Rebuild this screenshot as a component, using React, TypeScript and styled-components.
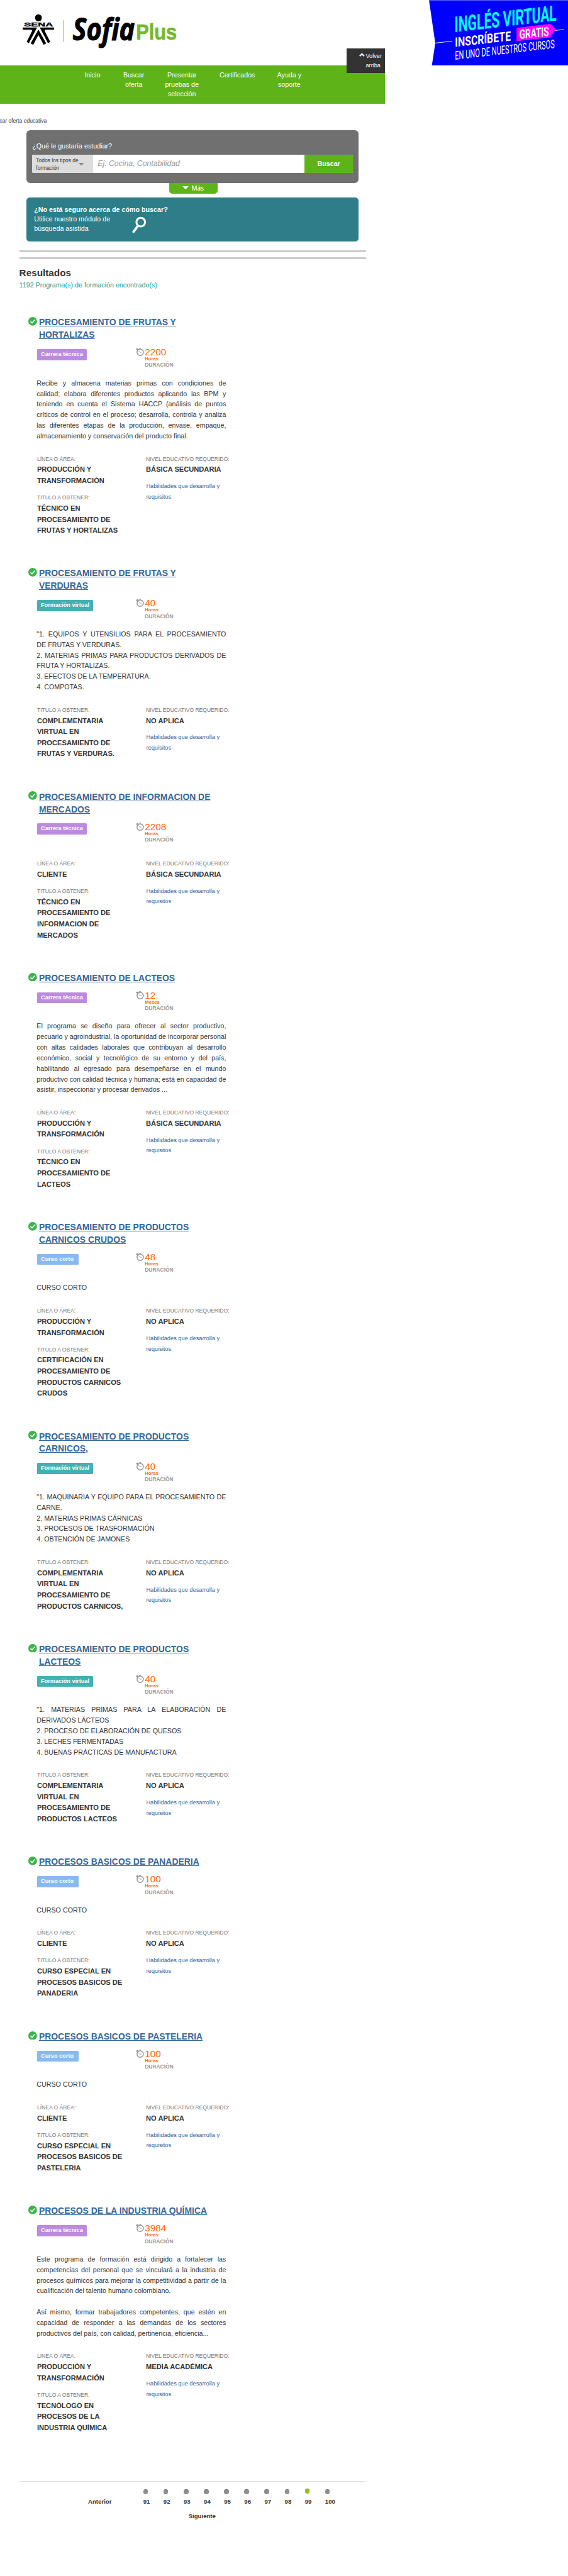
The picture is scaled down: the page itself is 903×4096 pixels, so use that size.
import React from "react";
import styled, { createGlobalStyle } from "styled-components";

const GlobalStyle = createGlobalStyle`
  html, body { margin: 0; padding: 0; background: #fff; }
  * { box-sizing: border-box; }
`;

const Page = styled.div`
  zoom: 0.76517;
  position: relative;
  width: 1180px;
  height: 5353px;
  overflow: hidden;
  background: #fff;
  color: #333;
  font-family: "Liberation Sans", Arial, sans-serif;
  font-size: 14px;
  line-height: 22px;
`;

/* ---------- header ---------- */

const Header = styled.header`
  display: flex;
  justify-content: space-between;
  height: 136px;

  svg { display: block; overflow: visible; }
`;

const MainColumn = styled.div`
  position: relative;
  width: 800px;
`;

const Nav = styled.nav`
  display: flex;
  height: 80px;
  padding: 10px 0 0 150px;
  background: #5eb319;
`;

const NavItem = styled.a<{ $width: number }>`
  width: ${(p) => p.$width}px;
  padding: 0 18px;
  color: #fff;
  text-align: center;
  line-height: 20px;
`;

const BackToTop = styled.a`
  position: absolute;
  top: -36px;
  right: 0;
  display: flex;
  width: 80px;
  height: 52px;
  padding: 7px 0 0 26.5px;
  background: #333;
  color: #fff;
  font-size: 12px;
  line-height: 20px;

  svg { flex: none; margin: 3px 2px 0 0; }
`;

const Breadcrumb = styled.div`
  display: flex;
  justify-content: flex-end;
  width: 97px;
  margin-top: 24px;
  font-size: 11.2px;
  white-space: nowrap;
`;

/* ---------- search ---------- */

const SearchPanel = styled.section`
  width: 690px;
  height: 110px;
  margin: 8px 0 0 55px;
  padding: 23px 12px 0;
  border-radius: 8px;
  background: #707070;
`;

const SearchTitle = styled.div`
  height: 29px;
  color: #fff;
`;

const SearchRow = styled.div`
  display: flex;
  height: 38px;
  border-radius: 3px;
  overflow: hidden;
  background: #fff;
`;

const TypeSelect = styled.div`
  display: flex;
  align-items: center;
  width: 127px;
  padding-left: 8px;
  background: #ddd;
  font-size: 11px;
  line-height: 16px;
  white-space: nowrap;

  svg { flex: none; }
`;

const SearchInput = styled.div`
  flex: 1;
  padding-left: 9px;
  color: #999;
  font-size: 16px;
  font-style: italic;
  line-height: 37px;
`;

const SearchButton = styled.div`
  width: 100px;
  background: #5eb319;
  color: #fff;
  font-weight: bold;
  line-height: 38px;
  text-align: center;
`;

const MoreTab = styled.div`
  display: flex;
  align-items: center;
  gap: 6px;
  width: 100px;
  height: 22px;
  margin-left: 352px;
  padding-left: 27px;
  border-radius: 0 0 7px 7px;
  background: #5eb319;
  color: #fff;
  font: 500 13px/22px "Noto Sans", sans-serif;
`;

const AssistPanel = styled.section`
  display: flex;
  width: 690px;
  height: 92px;
  margin: 8px 0 0 55px;
  padding: 16px;
  border-radius: 7px;
  background: #2d7e89;
  color: #fff;
  line-height: 20px;
  white-space: nowrap;

  svg { flex: none; margin: 24px 0 0 -73.5px; }
`;

const Rule = styled.div<{ $gap: number }>`
  height: 4px;
  margin: ${(p) => p.$gap}px 40px 0;
  background: #cbcbcb;
`;

const ResultsHeading = styled.h2`
  margin: 17px 0 0 40px;
  font-size: 20px;
  line-height: 24px;
`;

const ResultsCount = styled.div`
  margin: 2px 0 0 40px;
  padding-top: 1px;
  color: #16a09b;
`;

/* ---------- result cards ---------- */

const Results = styled.main`
  padding: 54px 0 0 59px;
`;

const Card = styled.article`
  padding-bottom: 65px;
`;

const TitleRow = styled.div`
  display: flex;

  svg { flex: none; margin: 1px 4px 0 0; }
`;

const Title = styled.a`
  width: 375px;
  color: #33689c;
  font-size: 18.2px;
  font-weight: bold;
  line-height: 26px;
  text-decoration: underline;
`;

const Meta = styled.div`
  display: flex;
  height: 62px;
  margin: 13.3px 0 0 18px;
`;

const badgeColors = {
  "Carrera técnica": "#bc8bdd",
  "Formación virtual": "#43b1b1",
  "Curso corto": "#88baf0",
};
type BadgeKind = keyof typeof badgeColors;

const BadgeCell = styled.div`
  width: 205px;
  padding-top: 1px;
`;

const Badge = styled.span<{ $kind: BadgeKind }>`
  display: inline-block;
  min-width: 86px;
  height: 23px;
  padding: 0 8px;
  border-radius: 2px;
  background: ${(p) => badgeColors[p.$kind]};
  color: #fff;
  font-size: 12px;
  font-weight: bold;
  line-height: 23px;
`;

const Duration = styled.div`
  display: flex;

  svg { flex: none; margin-right: 2px; }
`;

const Amount = styled.div`
  color: #ff6a0d;
  font-size: 20px;
  line-height: 17px;
`;

const Unit = styled.div`
  color: #ff6a0d;
  font-size: 10px;
  font-weight: bold;
  line-height: 12px;
`;

const DurationLabel = styled.div`
  color: #999;
  font-size: 11px;
  font-weight: bold;
  line-height: 14px;
`;

const Description = styled.p`
  width: 393.5px;
  margin: 0 0 0 17.2px;
  padding-bottom: 13px;
  text-align: justify;
  white-space: pre-line;
`;

const Fields = styled.div`
  display: flex;
  padding: 13px 0 0 18px;
`;

const Column = styled.div<{ $width: number }>`
  width: ${(p) => p.$width}px;
`;

const Field = styled.div`
  & + & { margin-top: 12.5px; }
`;

const Label = styled.div`
  color: #777;
  font-size: 11.2px;
  white-space: nowrap;
`;

const Value = styled.div`
  width: 200px;
  font-size: 14.56px;
  font-weight: bold;
  line-height: 23px;
`;

const SkillsLink = styled.a`
  display: block;
  width: 175px;
  margin: 12px 0 0 0.5px;
  color: #33689c;
  font-size: 12.1px;
`;

/* ---------- pagination ---------- */

const Pagination = styled.footer`
  margin: 34.2px 40px 0;
  padding-left: 143px;
  border-top: 1px solid #ddd;
  font-size: 12.6px;
  font-weight: bold;
`;

const PageRow = styled.div`
  display: flex;
  padding-top: 14px;
`;

const Previous = styled.a`
  width: 114.6px;
  padding-top: 17px;
`;

const PageLink = styled.a<{ $current?: boolean }>`
  width: 42px;

  &::before {
    content: "";
    display: block;
    width: 10px;
    height: 10px;
    margin: ${(p) => (p.$current ? "0 0 7px" : "1px 0 6px")};
    border-radius: 50%;
    background: ${(p) => (p.$current ? "#95bf1f" : "#8f8f8f")};
    box-shadow: inset 0 1px 1px rgba(0, 0, 0, 0.3);
  }
`;

const Next = styled.a`
  display: block;
  margin: 8px 0 0 208.6px;
`;

/* ---------- drawings ---------- */

const Logo = () => (
  <svg width="400" height="136" viewBox="0 0 400 136">
    <g transform="translate(40 24) scale(0.3333)">
      <ellipse cx="119.5" cy="39" rx="21.5" ry="21.5" />
      <path d="M22 100H111L60 198L46 189L79 124Q83 113 73 113H22Z" />
      <path d="M217 100H128L179 198L193 189L160 124Q156 113 166 113H217Z" />
      <path
        d="M119.500 112L168 199L152 207L119.500 147L87 207L71 199Z"
        stroke="#fff"
        strokeWidth="4"
        paintOrder="stroke"
      />
    </g>
    <text x="50" y="55.500" fontFamily="Liberation Sans" fontWeight="bold" fontSize="12.500" stroke="#000" strokeWidth="0.500" textLength="60" lengthAdjust="spacingAndGlyphs">SENA</text>
    <rect x="131" y="42" width="1" height="45" fill="#888" />
    <text x="151" y="83" fontFamily="Open Sans" fontWeight="bold" fontStyle="italic" fontSize="62" textLength="129" lengthAdjust="spacingAndGlyphs" stroke="#000" strokeWidth="1.400">Sofia</text>
    <text x="282.500" y="82.700" fontFamily="Liberation Sans" fontWeight="bold" fontSize="47" textLength="85" lengthAdjust="spacingAndGlyphs" fill="#76b82a" stroke="#76b82a" strokeWidth="0.800">Plus</text>
  </svg>
);

const Banner = () => (
  <svg width="289" height="136" viewBox="891 0 289 136">
    <path d="M891 0H1180V136H897L904 89.500Z" fill="#00f" />
    <path d="M891 0H1180V1H891Z" fill="#8080ff" />
    <path d="M904 89.500L939.500 85.500M1152 63.500L1171.500 61.200" stroke="#fff" strokeWidth="1.200" />
    <path d="M1073 57.700L1142.700 49.700L1154 61L1142.700 77.700L1073 85.700Z" fill="#f0f" />
    <g fontFamily="Roboto" fill="#fff">
      <text transform="matrix(1 -0.115 0 1 944 67)" fontSize="45" fontWeight="bold" fill="#0ff" textLength="212" lengthAdjust="spacingAndGlyphs">INGLÉS VIRTUAL</text>
      <text transform="matrix(1 -0.115 0 1 945 97.500)" fontSize="27" fontWeight="bold" textLength="116" lengthAdjust="spacingAndGlyphs">INSCRÍBETE</text>
      <text transform="matrix(1 -0.105 0 1 1079 81)" fontSize="27" fontWeight="bold" textLength="61" lengthAdjust="spacingAndGlyphs">GRATIS</text>
      <text transform="matrix(1 -0.118 0 1 945 124)" fontSize="24.500" textLength="207" lengthAdjust="spacingAndGlyphs">EN UNO DE NUESTROS CURSOS</text>
    </g>
  </svg>
);

const CheckIcon = () => (
  <svg width="18" height="18" viewBox="0 0 18 18">
    <circle cx="9" cy="9" r="9" fill="#39b54a" />
    <path d="M4.500 9.300L7.800 12.500L13.500 6" fill="none" stroke="#fff" strokeWidth="2" />
  </svg>
);

const ClockIcon = () => (
  <svg width="17" height="17" viewBox="0 0 17 17" fill="none" stroke="#939393">
    <circle cx="9" cy="9.300" r="6.600" strokeWidth="1.900" />
    <path d="M0.500 4L5 1.500M2 1.200L4 4.500" strokeWidth="1.800" />
    <path d="M7.300 0.900H10.300" strokeWidth="1.700" />
    <path d="M5.500 6L8.800 9.300H12" strokeWidth="1.200" />
  </svg>
);

const ChevronUp = () => (
  <svg width="11.500" height="9" viewBox="0 0 11.500 9">
    <path d="M1.200 7L5.750 2.300L10.300 7" fill="none" stroke="#fff" strokeWidth="2.900" />
  </svg>
);

const Triangle = ({ width, height, fill }: { width: number; height: number; fill: string }) => (
  <svg width={width} height={height} viewBox="0 0 12 7" preserveAspectRatio="none">
    <path d="M0 0H12L6 7Z" fill={fill} />
  </svg>
);

const Magnifier = () => (
  <svg width="30" height="35" viewBox="0 0 30 35" fill="none" stroke="#fff">
    <circle cx="18" cy="12" r="9" strokeWidth="4" />
    <path d="M12 20L3 32" strokeWidth="5" strokeLinecap="round" />
  </svg>
);

/* ---------- data ---------- */

interface Program {
  title: string;
  kind: BadgeKind;
  amount: number;
  unit?: string;
  description?: string;
  area?: string;
  degree: string;
  level: string;
}

const TRANSFORMATION = "PRODUCCIÓN Y TRANSFORMACIÓN";

const programs: Program[] = [
  {
    title: "PROCESAMIENTO DE FRUTAS Y HORTALIZAS",
    kind: "Carrera técnica",
    amount: 2200,
    description:
      "Recibe y almacena materias primas con condiciones de calidad; elabora diferentes productos aplicando las BPM y teniendo en cuenta el Sistema HACCP (análisis de puntos críticos de control en el proceso; desarrolla, controla y analiza las diferentes etapas de la producción, envase, empaque, almacenamiento y conservación del producto final.",
    area: TRANSFORMATION,
    degree: "TÉCNICO EN PROCESAMIENTO DE FRUTAS Y HORTALIZAS",
    level: "BÁSICA SECUNDARIA",
  },
  {
    title: "PROCESAMIENTO DE FRUTAS Y VERDURAS",
    kind: "Formación virtual",
    amount: 40,
    description:
      '"1. EQUIPOS Y UTENSILIOS PARA EL PROCESAMIENTO DE FRUTAS Y VERDURAS.\n2. MATERIAS PRIMAS PARA PRODUCTOS DERIVADOS DE FRUTA Y HORTALIZAS.\n3. EFECTOS DE LA TEMPERATURA.\n4. COMPOTAS.',
    degree: "COMPLEMENTARIA VIRTUAL EN PROCESAMIENTO DE FRUTAS Y VERDURAS.",
    level: "NO APLICA",
  },
  {
    title: "PROCESAMIENTO DE INFORMACION DE MERCADOS",
    kind: "Carrera técnica",
    amount: 2208,
    area: "CLIENTE",
    degree: "TÉCNICO EN PROCESAMIENTO DE INFORMACION DE MERCADOS",
    level: "BÁSICA SECUNDARIA",
  },
  {
    title: "PROCESAMIENTO DE LACTEOS",
    kind: "Carrera técnica",
    amount: 12,
    unit: "Meses",
    description:
      "El programa se diseño para ofrecer al sector productivo, pecuario y agroindustrial, la oportunidad de incorporar personal con altas calidades laborales que contribuyan al desarrollo económico, social y tecnológico de su entorno y del país, habilitando al egresado para desempeñarse en el mundo productivo con calidad técnica y humana; está en capacidad de asistir, inspeccionar y procesar derivados ...",
    area: TRANSFORMATION,
    degree: "TÉCNICO EN PROCESAMIENTO DE LACTEOS",
    level: "BÁSICA SECUNDARIA",
  },
  {
    title: "PROCESAMIENTO DE PRODUCTOS CARNICOS CRUDOS",
    kind: "Curso corto",
    amount: 48,
    description: "CURSO CORTO",
    area: TRANSFORMATION,
    degree: "CERTIFICACIÓN EN PROCESAMIENTO DE PRODUCTOS CARNICOS CRUDOS",
    level: "NO APLICA",
  },
  {
    title: "PROCESAMIENTO DE PRODUCTOS CARNICOS,",
    kind: "Formación virtual",
    amount: 40,
    description:
      '"1. MAQUINARIA Y EQUIPO PARA EL PROCESAMIENTO DE CARNE.\n2. MATERIAS PRIMAS CÁRNICAS\n3. PROCESOS DE TRASFORMACIÓN\n4. OBTENCIÓN DE JAMONES',
    degree: "COMPLEMENTARIA VIRTUAL EN PROCESAMIENTO DE PRODUCTOS CARNICOS,",
    level: "NO APLICA",
  },
  {
    title: "PROCESAMIENTO DE PRODUCTOS LACTEOS",
    kind: "Formación virtual",
    amount: 40,
    description:
      '"1. MATERIAS PRIMAS PARA LA ELABORACIÓN DE DERIVADOS LÁCTEOS\n2. PROCESO DE ELABORACIÓN DE QUESOS\n3. LECHES FERMENTADAS\n4. BUENAS PRÁCTICAS DE MANUFACTURA',
    degree: "COMPLEMENTARIA VIRTUAL EN PROCESAMIENTO DE PRODUCTOS LACTEOS",
    level: "NO APLICA",
  },
  {
    title: "PROCESOS BASICOS DE PANADERIA",
    kind: "Curso corto",
    amount: 100,
    description: "CURSO CORTO",
    area: "CLIENTE",
    degree: "CURSO ESPECIAL EN PROCESOS BASICOS DE PANADERIA",
    level: "NO APLICA",
  },
  {
    title: "PROCESOS BASICOS DE PASTELERIA",
    kind: "Curso corto",
    amount: 100,
    description: "CURSO CORTO",
    area: "CLIENTE",
    degree: "CURSO ESPECIAL EN PROCESOS BASICOS DE PASTELERIA",
    level: "NO APLICA",
  },
  {
    title: "PROCESOS DE LA INDUSTRIA QUÍMICA",
    kind: "Carrera técnica",
    amount: 3984,
    description:
      "Este programa de formación está dirigido a fortalecer las competencias del personal que se vinculará a la industria de procesos químicos para mejorar la competitividad a partir de la cualificación del talento humano colombiano.\n\nAsí mismo, formar trabajadores competentes, que estén en capacidad de responder a las demandas de los sectores productivos del país, con calidad, pertinencia, eficiencia...",
    area: TRANSFORMATION,
    degree: "TECNÓLOGO EN PROCESOS DE LA INDUSTRIA QUÍMICA",
    level: "MEDIA ACADÉMICA",
  },
];

const navItems = [
  { label: "Inicio", width: 84 },
  { label: "Buscar oferta", width: 88 },
  { label: "Presentar pruebas de selección", width: 112 },
  { label: "Certificados", width: 118 },
  { label: "Ayuda y soporte", width: 98 },
];

const pages = [91, 92, 93, 94, 95, 96, 97, 98, 99, 100];

const LabeledValue = ({ label, value }: { label: string; value: string }) => (
  <Field>
    <Label>{label}</Label>
    <Value>{value}</Value>
  </Field>
);

const ProgramCard = ({ program }: { program: Program }) => (
  <Card>
    <TitleRow>
      <CheckIcon />
      <Title>{program.title}</Title>
    </TitleRow>
    <Meta>
      <BadgeCell>
        <Badge $kind={program.kind}>{program.kind}</Badge>
      </BadgeCell>
      <Duration>
        <ClockIcon />
        <div>
          <Amount>{program.amount}</Amount>
          <Unit>{program.unit ?? "Horas"}</Unit>
          <DurationLabel>DURACIÓN</DurationLabel>
        </div>
      </Duration>
    </Meta>
    {program.description && <Description>{program.description}</Description>}
    <Fields>
      <Column $width={226.3}>
        {program.area && <LabeledValue label="LÍNEA O ÁREA:" value={program.area} />}
        <LabeledValue label="TITULO A OBTENER:" value={program.degree} />
      </Column>
      <Column $width={200}>
        <LabeledValue label="NIVEL EDUCATIVO REQUERIDO:" value={program.level} />
        <SkillsLink>Habilidades que desarrolla y requisitos</SkillsLink>
      </Column>
    </Fields>
  </Card>
);

export default function App() {
  return (
    <Page>
      <GlobalStyle />
      <Header>
        <Logo />
        <Banner />
      </Header>
      <MainColumn>
        <Nav>
          {navItems.map((item) => (
            <NavItem key={item.label} $width={item.width}>
              {item.label}
            </NavItem>
          ))}
        </Nav>
        <BackToTop>
          <ChevronUp />
          <span>Volver arriba</span>
        </BackToTop>
        <Breadcrumb>Buscar oferta educativa</Breadcrumb>
        <SearchPanel>
          <SearchTitle>¿Qué le gustaría estudiar?</SearchTitle>
          <SearchRow>
            <TypeSelect>
              <span>
                Todos los tipos de
                <br />
                formación
              </span>
              <Triangle width={11.5} height={6} fill="#888" />
            </TypeSelect>
            <SearchInput>Ej: Cocina, Contabilidad</SearchInput>
            <SearchButton>Buscar</SearchButton>
          </SearchRow>
        </SearchPanel>
        <MoreTab>
          <Triangle width={13} height={7} fill="#fff" />
          Más
        </MoreTab>
        <AssistPanel>
          <div>
            <strong>¿No está seguro acerca de cómo buscar?</strong>
            <br />
            Utilice nuestro módulo de
            <br />
            búsqueda asistida
          </div>
          <Magnifier />
        </AssistPanel>
        <Rule $gap={18} />
        <Rule $gap={10} />
        <ResultsHeading>Resultados</ResultsHeading>
        <ResultsCount>1192 Programa(s) de formación encontrado(s)</ResultsCount>
        <Results>
          {programs.map((program) => (
            <ProgramCard key={program.title} program={program} />
          ))}
        </Results>
        <Pagination>
          <PageRow>
            <Previous>Anterior</Previous>
            {pages.map((n) => (
              <PageLink key={n} $current={n === 99}>
                {n}
              </PageLink>
            ))}
          </PageRow>
          <Next>Siguiente</Next>
        </Pagination>
      </MainColumn>
    </Page>
  );
}
